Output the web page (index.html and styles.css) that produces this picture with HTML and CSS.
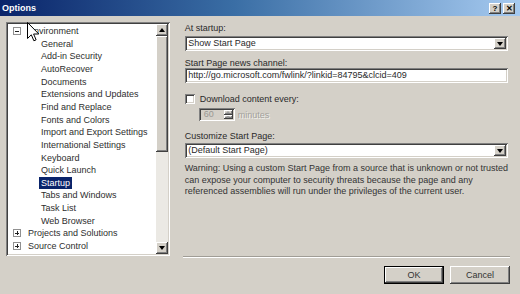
FILE: index.html
```html
<!DOCTYPE html>
<html lang="en">
<head>
  <meta charset="UTF-8">
  <title>Options</title>
  <link rel="stylesheet" href="styles.css">
</head>
<body>
  <div class="titlebar">
    <span class="title">Options</span>
    <div class="caption-btns">
      <span class="cbtn">?</span>
      <span class="cbtn">&#x2715;</span>
    </div>
  </div>

  <div class="main">
    <div class="tree">
      <ul class="tree-list">
        <li class="row root"><span class="expander minus"></span><span class="label">Environment</span></li>
        <li class="row child"><span class="label">General</span></li>
        <li class="row child"><span class="label">Add-in Security</span></li>
        <li class="row child"><span class="label">AutoRecover</span></li>
        <li class="row child"><span class="label">Documents</span></li>
        <li class="row child"><span class="label">Extensions and Updates</span></li>
        <li class="row child"><span class="label">Find and Replace</span></li>
        <li class="row child"><span class="label">Fonts and Colors</span></li>
        <li class="row child"><span class="label">Import and Export Settings</span></li>
        <li class="row child"><span class="label">International Settings</span></li>
        <li class="row child"><span class="label">Keyboard</span></li>
        <li class="row child"><span class="label">Quick Launch</span></li>
        <li class="row child"><span class="label selected">Startup</span></li>
        <li class="row child"><span class="label">Tabs and Windows</span></li>
        <li class="row child"><span class="label">Task List</span></li>
        <li class="row child"><span class="label">Web Browser</span></li>
        <li class="row root"><span class="expander plus"></span><span class="label">Projects and Solutions</span></li>
        <li class="row root"><span class="expander plus"></span><span class="label">Source Control</span></li>
      </ul>
      <div class="scrollbar">
        <span class="sb-btn"><span class="arrow up"></span></span>
        <span class="sb-thumb"></span>
        <span class="sb-track"></span>
        <span class="sb-btn"><span class="arrow down"></span></span>
      </div>
    </div>

    <div class="pane">
      <div class="fields">
        <div class="lbl lbl-first">At startup:</div>
        <div class="combo combo-first">
          <span class="combo-text">Show Start Page</span>
          <span class="drop"><span class="arrow down"></span></span>
        </div>

        <div class="lbl lbl-news">Start Page news channel:</div>
        <div class="textbox">http://go.microsoft.com/fwlink/?linkid=84795&amp;clcid=409</div>

        <div class="check-row">
          <span class="checkbox"></span>
          <span class="check-label">Download content every:</span>
        </div>

        <div class="spin-row">
          <div class="spinner">
            <span class="spin-value">60</span>
            <span class="spin-btns">
              <span class="spin-btn"><span class="arrow tiny up"></span></span>
              <span class="spin-btn"><span class="arrow tiny down"></span></span>
            </span>
          </div>
          <span class="disabled-text">minutes</span>
        </div>

        <div class="lbl lbl-custom">Customize Start Page:</div>
        <div class="combo">
          <span class="combo-text">(Default Start Page)</span>
          <span class="drop"><span class="arrow down"></span></span>
        </div>

        <p class="warning">Warning: Using a custom Start Page from a source that is unknown or not trusted<br>can expose your computer to security threats because the page and any<br>referenced assemblies will run under the privileges of the current user.</p>
      </div>

      <div class="footer">
        <div class="separator"></div>
        <div class="buttons">
          <button class="btn default">OK</button>
          <button class="btn">Cancel</button>
        </div>
      </div>
    </div>
  </div>

  <svg class="cursor" width="13" height="20" viewBox="0 0 13 20">
    <path d="M0.5 0.5 V16.5 L4.3 12.8 L6.9 18.8 L9.1 17.8 L6.6 12 H11.8 Z" fill="#fff" stroke="#000" stroke-width="1" stroke-linejoin="round"/>
  </svg>
</body>
</html>
```

FILE: styles.css
```css
* {
  box-sizing: border-box;
}

body {
  margin: 0;
  width: 520px;
  height: 294px;
  overflow: hidden;
  position: relative;
  background: #d4d0c8;
  font-family: 'Liberation Sans', Arial, sans-serif;
  font-size: 9px;
  color: #2a2a2a;
}

/* title bar */
.titlebar {
  height: 16px;
  display: flex;
  align-items: center;
  justify-content: space-between;
  padding: 0 5px 0 2px;
  background: linear-gradient(to right, #0a246a, #3a6ea5 45%, #a6caf0);
}

.title {
  color: #fff;
  font-weight: bold;
  font-size: 9px;
}

.caption-btns {
  display: flex;
  gap: 2px;
}

.cbtn {
  width: 12px;
  height: 11px;
  background: #d4d0c8;
  box-shadow: inset -1px -1px #404040, inset 1px 1px #fff, inset -2px -2px #808080;
  font-weight: bold;
  font-size: 8px;
  line-height: 11px;
  text-align: center;
  color: #000;
}

/* layout */
.main {
  display: flex;
  height: 278px;
  padding: 6px 9px 10px 6px;
}

/* tree view */
.tree {
  width: 167px;
  height: 234px;
  padding: 2px;
  display: flex;
  background: #fff;
  box-shadow: inset 1px 1px #808080, inset -1px -1px #fff, inset 2px 2px #404040, inset -2px -2px #d4d0c8;
}

.tree-list {
  flex: 1;
  list-style: none;
  margin: 0;
  padding: 0.8px 0 0 0;
  color: #2e2e2e;
}

.row {
  height: 12.65px;
  display: flex;
  align-items: center;
  white-space: nowrap;
}

.root {
  padding-left: 5px;
}

.child {
  padding-left: 33px;
}

.label {
  padding: 0 2px;
  margin-left: -2px;
  line-height: 12px;
}

.selected {
  background: #0a246a;
  color: #fff;
}

.expander {
  position: relative;
  width: 8px;
  height: 8px;
  margin-right: 7px;
  border: 1px solid #909090;
  background: #fff;
}

.expander::before {
  content: '';
  position: absolute;
  left: 1px;
  top: 2.5px;
  width: 4px;
  height: 1px;
  background: #222;
}

.plus::after {
  content: '';
  position: absolute;
  left: 2.5px;
  top: 1px;
  width: 1px;
  height: 4px;
  background: #222;
}

/* scrollbar */
.scrollbar {
  width: 12px;
  display: flex;
  flex-direction: column;
}

.sb-btn,
.sb-thumb,
.spin-btn,
.drop {
  background: #d4d0c8;
  box-shadow: inset -1px -1px #404040, inset 1px 1px #fff, inset -2px -2px #808080, inset 2px 2px #d4d0c8;
}

.sb-btn {
  height: 12px;
  display: flex;
  align-items: center;
  justify-content: center;
}

.sb-thumb {
  height: 116px;
}

.sb-track {
  flex: 1;
  background: #ebe9e4;
}

.arrow {
  width: 0;
  height: 0;
  border-left: 3.5px solid transparent;
  border-right: 3.5px solid transparent;
}

.arrow.up {
  border-bottom: 4px solid #000;
}

.arrow.down {
  border-top: 4px solid #000;
}

.arrow.tiny {
  border-left-width: 2.5px;
  border-right-width: 2.5px;
}

.arrow.tiny.up {
  border-bottom: 2px solid #a0a0a0;
}

.arrow.tiny.down {
  border-top: 2px solid #a0a0a0;
}

/* right pane */
.pane {
  flex: 1;
  margin-left: 13px;
  display: flex;
  flex-direction: column;
}

.fields {
  padding: 2px 3px 0 2px;
}

.lbl {
  line-height: 9px;
  height: 9px;
  white-space: nowrap;
}

.combo,
.textbox,
.checkbox,
.spinner {
  background: #fff;
  box-shadow: inset 1px 1px #808080, inset -1px -1px #fff, inset 2px 2px #404040, inset -2px -2px #d4d0c8;
}

.combo {
  height: 15px;
  margin-top: 2px;
  padding: 2px;
  display: flex;
  align-items: center;
}

.combo-first {
  margin-top: 3px;
}

.combo-text {
  flex: 1;
  padding-left: 1.5px;
  line-height: 11px;
}

.drop {
  width: 12px;
  height: 11px;
  display: flex;
  align-items: center;
  justify-content: center;
}

.lbl-news {
  margin-top: 8px;
}

.textbox {
  height: 15px;
  padding: 0 3.5px;
  line-height: 15px;
  white-space: nowrap;
}

.check-row {
  margin-top: 11px;
  height: 10px;
  display: flex;
  align-items: center;
  gap: 5px;
}

.checkbox {
  width: 10px;
  height: 10px;
}

.check-label {
  line-height: 9px;
}

.spin-row {
  margin-top: 4px;
  display: flex;
  align-items: center;
}

.spinner {
  width: 36px;
  height: 13px;
  margin-left: 14px;
  padding: 2px;
  display: flex;
  background: #d4d0c8;
}

.spin-value {
  flex: 1;
  padding-left: 3px;
  line-height: 9px;
  color: #9a9893;
}

.spin-btns {
  width: 9px;
  display: flex;
  flex-direction: column;
}

.spin-btn {
  flex: 1;
  display: flex;
  align-items: center;
  justify-content: center;
}

.disabled-text {
  margin-left: 3px;
  color: #a3a19b;
  text-shadow: 1px 1px #f2f1ee;
}

.lbl-custom {
  margin-top: 11px;
}

.warning {
  margin: 5px 0 0;
  line-height: 11.5px;
  white-space: nowrap;
  color: #333;
}

/* footer */
.footer {
  margin-top: auto;
}

.separator {
  height: 2px;
  margin-right: 1px;
  border-top: 1px solid #a09d96;
  border-bottom: 1px solid #fff;
}

.buttons {
  margin-top: 8px;
  padding-right: 1px;
  display: flex;
  justify-content: flex-end;
  gap: 6px;
}

.btn {
  width: 60px;
  height: 18px;
  padding: 0;
  border: none;
  background: #d4d0c8;
  font-family: inherit;
  font-size: 9px;
  color: #333;
  box-shadow: inset -1px -1px #404040, inset 1px 1px #fff, inset -2px -2px #808080, inset 2px 2px #d4d0c8;
}

.btn.default {
  border: 1px solid #000;
  box-shadow: inset -1px -1px #404040, inset 1px 1px #fff, inset -2px -2px #808080;
}

/* mouse pointer over the tree */
.cursor {
  position: absolute;
  left: 27px;
  top: 22px;
}
```
